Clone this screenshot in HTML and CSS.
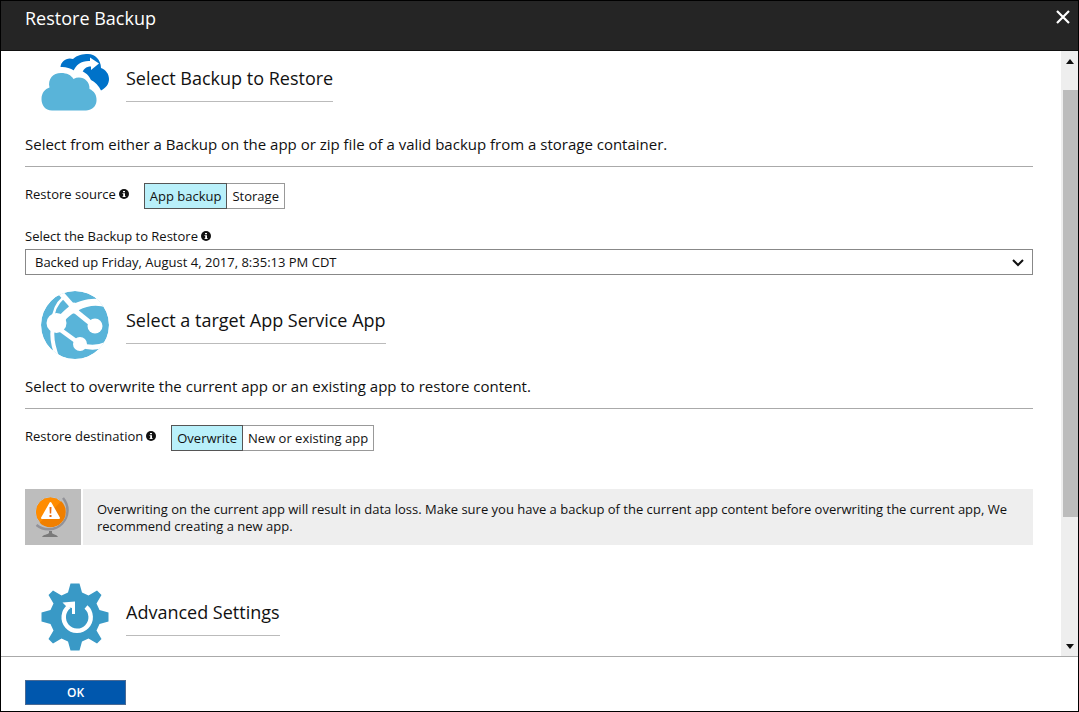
FILE: index.html
```html
<!DOCTYPE html>
<html lang="en">
<head>
<meta charset="utf-8">
<title>Restore Backup</title>
<link rel="stylesheet" href="styles.css">
</head>
<body>
<div class="blade">
  <header class="blade-header">
    <h1 class="blade-title">Restore Backup</h1>
    <button class="close" type="button" aria-label="Close">
      <svg width="14" height="14" viewBox="0 0 14 14"><path d="M1 1l12 12M13 1L1 13" stroke="#fff" stroke-width="2.2"/></svg>
    </button>
  </header>

  <div class="blade-body">
    <main class="content">
      <section class="section">
        <div class="section-head section-head-first">
          <svg class="section-icon" width="68" height="66" viewBox="0 0 68 66">
            <path d="M19.500 16C20 10 26 6 32 8C36 4 42 3 47 3C54 3 60 9 60 17C65 19 68 23 68 28C68 33 65 37 60 39.500C58 35 54 31 50 29C47 22 40 18 33 19.500C29 17 24 15.500 19.500 16Z" fill="#0072c9"/>
            <path d="M32 21C35 13 41 9.500 49 10V6.500L58 12.500L50 19V15.500C45 15.500 42 18 41 23Z" fill="#fff"/>
            <path d="M11 59.500C4 59.500 .5 54 .5 48C.5 42 4 38 8.500 36.500C6.500 28 12 22 20 22C26 22 30 24 32.500 28C40 24 49 29 48.500 38C53 40 56 44 55.500 50C55 56 50 59.500 45 59.500Z" fill="#59b4d9"/>
          </svg>
          <h2 class="section-title">Select Backup to Restore</h2>
        </div>
        <p class="lead">Select from either a Backup on the app or zip file of a valid backup from a storage container.</p>
        <div class="option-row" role="radiogroup" aria-labelledby="source-label">
          <span class="field-label" id="source-label">Restore source
            <svg class="info" width="10" height="10" viewBox="0 0 10 10"><circle cx="5" cy="5" r="5" fill="#111"/><path d="M4 2h2v1.300H4zM3.500 4.200H6v3h.7v.8H3.500v-.8h.7V5h-.7z" fill="#fff"/></svg>
          </span>
          <span class="segments">
            <label class="segment"><input class="segment-input" type="radio" name="source" checked>App backup</label>
            <label class="segment"><input class="segment-input" type="radio" name="source">Storage</label>
          </span>
        </div>
        <label class="field-label select-label" for="backup">Select the Backup to Restore
          <svg class="info" width="10" height="10" viewBox="0 0 10 10"><circle cx="5" cy="5" r="5" fill="#111"/><path d="M4 2h2v1.300H4zM3.500 4.200H6v3h.7v.8H3.500v-.8h.7V5h-.7z" fill="#fff"/></svg>
        </label>
        <div class="select-wrap">
          <select class="select" id="backup"><option>Backed up Friday, August 4, 2017, 8:35:13 PM CDT</option></select>
          <svg class="chevron" width="12" height="8" viewBox="0 0 12 8"><path d="M1 1l5 5 5-5" fill="none" stroke="#111" stroke-width="2"/></svg>
        </div>
      </section>

      <section class="section section-target">
        <div class="section-head">
          <svg class="section-icon" width="68" height="68" viewBox="0 0 68 68">
            <defs><clipPath id="globe"><circle cx="34" cy="34" r="34"/></clipPath></defs>
            <g clip-path="url(#globe)">
              <circle cx="34" cy="34" r="34" fill="#59b4d9"/>
              <path d="M14 30C22 19 30 13 40 10C50 7 58 7 66 10V17C56 13 46 15 38 19C30 23 25 27 21 34Z" fill="#fff"/>
              <g fill="none" stroke="#fff">
                <path d="M17 -1L34 18" stroke-width="5.500"/>
                <path d="M12 30C12 21 15 13 22 7" stroke-width="2.500"/>
                <path d="M12 36C10 46 12 56 17 68" stroke-width="4"/>
                <path d="M32 18L53 35" stroke-width="5"/>
                <path d="M17 37L39 53" stroke-width="4.500"/>
                <path d="M39 54C48 57 57 57 66 53" stroke-width="5"/>
              </g>
              <g fill="#fff"><circle cx="15.500" cy="32" r="10"/><circle cx="33" cy="17" r="5.500"/><circle cx="54" cy="35" r="7.500"/><circle cx="39" cy="53" r="7"/></g>
            </g>
          </svg>
          <h2 class="section-title">Select a target App Service App</h2>
        </div>
        <p class="lead">Select to overwrite the current app or an existing app to restore content.</p>
        <div class="option-row" role="radiogroup" aria-labelledby="destination-label">
          <span class="field-label" id="destination-label">Restore destination
            <svg class="info" width="10" height="10" viewBox="0 0 10 10"><circle cx="5" cy="5" r="5" fill="#111"/><path d="M4 2h2v1.300H4zM3.500 4.200H6v3h.7v.8H3.500v-.8h.7V5h-.7z" fill="#fff"/></svg>
          </span>
          <span class="segments">
            <label class="segment"><input class="segment-input" type="radio" name="destination" checked>Overwrite</label>
            <label class="segment"><input class="segment-input" type="radio" name="destination">New or existing app</label>
          </span>
        </div>
        <div class="notice" role="note">
          <div class="notice-icon">
            <svg width="56" height="56" viewBox="0 0 56 56">
              <path d="M38 9A19 19 0 0 1 11.500 36" fill="none" stroke="#929298" stroke-width="2.500"/>
              <path d="M24 42h3v2c1 1.500 5 1.500 6 4H17c1-2.500 6-2.500 7-4z" fill="#7a7a7a"/>
              <circle cx="25.500" cy="23" r="15.200" fill="#ff8c00" stroke="#b4c7dc" stroke-width="1"/>
              <path d="M36.300 12.200A15.200 15.200 0 0 1 14.700 33.800Z" fill="#f07f00"/>
              <path d="M25.500 14L34 29H17Z" fill="#fff" stroke="#fff" stroke-width="2" stroke-linejoin="round"/>
              <path d="M24.500 18h2l-.3 6.500h-1.400zM24.500 26h2v2h-2z" fill="#e8690b"/>
            </svg>
          </div>
          <p class="notice-text">Overwriting on the current app will result in data loss. Make sure you have a backup of the current app content before overwriting the current app, We recommend creating a new app.</p>
        </div>
      </section>

      <section class="section section-advanced">
        <div class="section-head">
          <svg class="section-icon" width="68" height="68" viewBox="0 0 68 68">
            <path d="M29.500 .5H38.500L41 9.500L47.500 12.500L56 7.500L60.500 12L55.500 20.500L58.500 27L67.500 29.500V38.500L58.500 41L55.500 47.500L60.500 56L56 60.500L47.500 55.500L41 58.500L38.500 67.500H29.500L27 58.500L20.500 55.500L12 60.500L7.500 56L12.500 47.500L9.500 41L.5 38.500V29.500L9.500 27L12.500 20.500L7.500 12L12 7.500L20.500 12.500L27 9.500Z" fill="#3999c6"/>
            <path d="M45 24A13.500 13.500 0 1 1 28 23.500" fill="none" stroke="#fff" stroke-width="4.500"/>
            <path d="M21.500 19.500L34 18.500V31H31V25L26 24Z" fill="#fff"/>
          </svg>
          <h2 class="section-title">Advanced Settings</h2>
        </div>
      </section>
    </main>

    <div class="scrollbar" aria-hidden="true">
      <svg class="arrow" width="8" height="5" viewBox="0 0 8 5"><path d="M4 0l4 5H0z" fill="#111"/></svg>
      <div class="track"><div class="thumb"></div></div>
      <svg class="arrow" width="8" height="5" viewBox="0 0 8 5"><path d="M0 0h8L4 5z" fill="#111"/></svg>
    </div>
  </div>

  <footer class="blade-footer"><button class="ok" type="button">OK</button></footer>
</div>
</body>
</html>
```
FILE: styles.css
```css
* { box-sizing: border-box; }

body {
  margin: 0;
  font-family: "Open Sans", "Noto Sans", sans-serif;
  font-size: 13px;
  color: #111;
  background: #fff;
}

h1, h2, p { margin: 0; font-weight: 400; }

.blade {
  display: flex;
  flex-direction: column;
  height: 100vh;
  border: 1px solid #000;
}

.blade-header {
  display: flex;
  justify-content: space-between;
  align-items: flex-start;
  height: 50px;
  flex: none;
  padding: 4px 8px 0 24px;
  background: #252525;
  border-bottom: 1px solid #111;
  color: #fff;
}

.blade-title { font-size: 18px; line-height: 26px; }

.close {
  display: flex;
  margin-top: 5px;
  padding: 0;
  border: 0;
  background: none;
}

.blade-body { display: flex; flex: 1; min-height: 0; }

.content {
  flex: 1;
  min-width: 0;
  padding: 0 28px 0 24px;
  overflow: hidden;
}

.section-head {
  display: flex;
  align-items: flex-end;
  gap: 17px;
  height: 68px;
  padding-left: 16px;
}

.section-head-first { height: 66px; }
.section-icon { flex: none; }

.section-title {
  margin-bottom: 15px;
  padding-bottom: 10px;
  border-bottom: 1px solid #bbb;
  font-size: 18px;
  line-height: 26px;
}

.lead {
  padding: 16px 0 11px;
  border-bottom: 1px solid #aaa;
  font-size: 15px;
  line-height: 22px;
}

.option-row {
  display: flex;
  align-items: flex-start;
  margin-top: 16px;
}

.field-label {
  display: flex;
  align-items: center;
  gap: 3px;
  line-height: 22px;
}

.info { flex: none; }
.segments { display: flex; margin-left: 15px; }

.segment {
  position: relative;
  height: 26px;
  padding: 0 5px;
  border: 1px solid #999;
  line-height: 24px;
}

.segment-input {
  position: absolute;
  inset: 0;
  margin: 0;
  opacity: 0;
}

.segment + .segment { border-left: 0; }
.segment:has(:checked) { background: #b9f0fa; border: 1px solid #555; }

.select-label { margin-top: 16px; padding-bottom: 2px; }
.select-wrap { position: relative; }

.select {
  display: block;
  width: 100%;
  height: 26px;
  padding: 0 24px 0 9px;
  border: 1px solid #888;
  border-radius: 0;
  background: #fff;
  color: #111;
  font: inherit;
  appearance: none;
}

.chevron { position: absolute; right: 9px; top: 10px; pointer-events: none; }

.section-target { margin-top: 16px; }
.section-advanced { margin-top: 38px; }

.notice { display: flex; gap: 2px; margin-top: 38px; }
.notice-icon { display: flex; flex: none; background: #bdbdbd; }

.notice-text {
  flex: 1;
  padding: 12px 24px 0 14px;
  background: #eee;
  line-height: 17px;
}

.scrollbar {
  display: flex;
  flex-direction: column;
  align-items: stretch;
  width: 17px;
  padding: 8px 0 7px;
  background: #eee;
}

.arrow { flex: none; align-self: center; }
.track { flex: 1; margin: 26px 0 20px; }
.thumb { height: 80%; margin-left: 2px; background: #bcbcbc; }

.blade-footer {
  flex: none;
  height: 55px;
  padding: 23px 24px 0;
  border-top: 1px solid #aaa;
}

.ok {
  display: block;
  width: 101px;
  height: 25px;
  padding: 0;
  border: 1px solid #4a6a94;
  background: #0057ad;
  color: #fff;
  font: inherit;
  font-weight: 600;
  font-size: 12px;
}
```
